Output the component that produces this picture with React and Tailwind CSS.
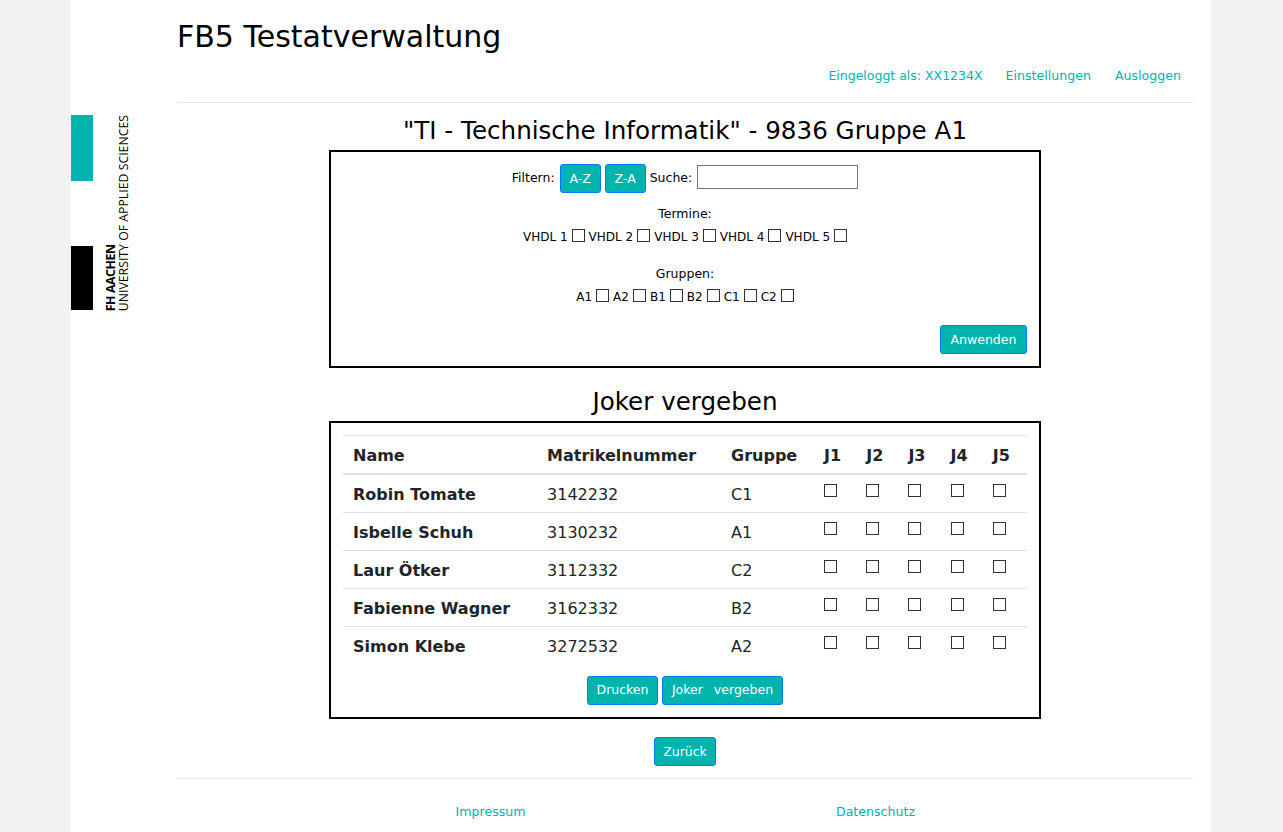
const font = { fontFamily: '"DejaVu Sans", Verdana, sans-serif' };

const Btn = ({ children, className = "" }) => (
  <button
    className={
      "h-[29px] pt-px bg-[#00b3ad] text-white text-[12.5px] border border-[#007bff] rounded-[3px] " + className
    }
  >
    {children}
  </button>
);

const Check = ({ className = "" }) => (
  <input
    type="checkbox"
    className={"appearance-none w-[13px] h-[13px] border border-[#333] bg-white inline-block " + className}
  />
);

const Labeled = ({ items }) => (
  <div className="flex justify-center items-center gap-[4px] text-[12px] text-black">
    {items.map((t) => (
      <span key={t} className="flex items-center gap-[4px]">
        <span className="mt-[3px]">{t}</span>
        <Check />
      </span>
    ))}
  </div>
);

const students = [
  ["Robin Tomate", "3142232", "C1"],
  ["Isbelle Schuh", "3130232", "A1"],
  ["Laur Ötker", "3112332", "C2"],
  ["Fabienne Wagner", "3162332", "B2"],
  ["Simon Klebe", "3272532", "A2"],
];

const jokers = ["J1", "J2", "J3", "J4", "J5"];

const Logo = () => (
  <div className="relative h-[195px] w-[60px]">
    <div className="w-[22px] h-[66px] bg-[#00b3ad]" />
    <div className="w-[22px] h-[64px] bg-black mt-[65px]" />
    <div
      className="absolute left-[33px] -bottom-px rotate-180 text-[12.3px] leading-[13px] text-black whitespace-nowrap [writing-mode:vertical-rl]"
      style={{ fontFamily: '"Open Sans", sans-serif' }}
    >
      <span className="font-bold tracking-[-0.4px]">FH AACHEN</span>
      <br />
      UNIVERSITY OF APPLIED SCIENCES
    </div>
  </div>
);

export default function App() {
  return (
    <div className="min-h-screen h-[832px] overflow-hidden bg-[#f2f2f2]" style={font}>
      <div className="ml-[71px] w-[1140px] h-full bg-white flex">
        <div className="w-[106px] pt-[115px] shrink-0">
          <Logo />
        </div>

        <div className="w-[1016px]">
          <header className="h-[103px] border-b border-[#e5e5e5]">
            <h1 className="pt-[17px] text-[30px] leading-[40px] text-black">FB5 Testatverwaltung</h1>
            <nav className="flex justify-end gap-[24px] pr-[12px] mt-[11px] text-[12.6px] leading-[16px] text-[#00b3ad]">
              <a className="text-[12.5px] -mr-px">Eingeloggt als: XX1234X</a>
              <a>Einstellungen</a>
              <a>Ausloggen</a>
            </nav>
          </header>

          <main className="flex flex-col items-center">
            <h2 className="mt-[12px] h-[35px] text-[24.6px] leading-[32px] text-black">
              "TI - Technische Informatik" - 9836 Gruppe A1
            </h2>

            <section className="w-[712px] h-[218px] border-2 border-black px-[12px] pt-[12px] text-[12.5px] text-black">
              <div className="flex justify-center items-center gap-[4px]">
                <span className="mr-px">Filtern:</span>
                <Btn className="w-[41px]">A-Z</Btn>
                <Btn className="w-[41px]">Z-A</Btn>
                <span className="mr-px">Suche:</span>
                <input className="w-[161px] h-[24px] -mt-[3px] border border-[#767676] bg-white" />
              </div>
              <p className="mt-[13px] text-center leading-[16px]">Termine:</p>
              <div className="mt-[3px]">
                <Labeled items={["VHDL 1", "VHDL 2", "VHDL 3", "VHDL 4", "VHDL 5"]} />
              </div>
              <p className="mt-[20px] text-center leading-[16px]">Gruppen:</p>
              <div className="mt-[3px]">
                <Labeled items={["A1", "A2", "B1", "B2", "C1", "C2"]} />
              </div>
              <div className="flex justify-end mt-[19px]">
                <Btn className="w-[87px]">Anwenden</Btn>
              </div>
            </section>

            <h2 className="mt-[18px] h-[36px] text-[24.6px] leading-[32px] text-black">Joker vergeben</h2>

            <section className="w-[712px] h-[298px] -mt-[1px] border-2 border-black px-[12px] pt-[12px]">
              <table className="w-[684px] table-fixed border-collapse text-[16px] text-[#212529]">
                <colgroup>
                  <col className="w-[194px]" />
                  <col className="w-[184px]" />
                  <col className="w-[93px]" />
                  <col span="4" className="w-[42.2px]" />
                  <col className="w-[44.2px]" />
                </colgroup>
                <thead>
                  <tr className="h-[38px] border-t border-b-2 border-t-[#dee2e6] border-b-[#dee2e6]">
                    <th className="px-[10px] pt-[4px] text-left font-bold">Name</th>
                    <th className="px-[10px] pt-[4px] text-left font-bold">Matrikelnummer</th>
                    <th className="px-[10px] pt-[4px] text-left font-bold">Gruppe</th>
                    {jokers.map((j) => (
                      <th key={j} className="px-[10px] pt-[4px] text-left font-bold">
                        {j}
                      </th>
                    ))}
                  </tr>
                </thead>
                <tbody>
                  {students.map(([name, nr, group]) => (
                    <tr key={nr} className="group h-[38px] first:h-[39px] border-b border-[#dee2e6] last:border-b-0">
                      <td className="px-[10px] pt-[2px] group-first:pt-[3px] font-bold">{name}</td>
                      <td className="px-[10px] pt-[2px] group-first:pt-[3px]">{nr}</td>
                      <td className="px-[10px] pt-[2px] group-first:pt-[3px]">{group}</td>
                      {jokers.map((j) => (
                        <td key={j} className="px-[10px] align-top pt-[5px]">
                          <Check className="block" />
                        </td>
                      ))}
                    </tr>
                  ))}
                </tbody>
              </table>
              <div className="flex justify-center gap-[4px] mt-[11px]">
                <Btn className="w-[71px]">Drucken</Btn>
                <Btn className="w-[121px] [word-spacing:7px]">Joker vergeben</Btn>
              </div>
            </section>

            <div className="mt-[18px]">
              <Btn className="w-[62px]">Zurück</Btn>
            </div>
          </main>

          <footer className="mt-[12px] border-t border-[#e5e5e5] pt-[25px] pl-[121px] flex text-[12.6px] leading-[16px] text-[#00b3ad]">
            <a className="w-[385px] text-center">Impressum</a>
            <a className="w-[385px] text-center">Datenschutz</a>
          </footer>
        </div>
      </div>
    </div>
  );
}
